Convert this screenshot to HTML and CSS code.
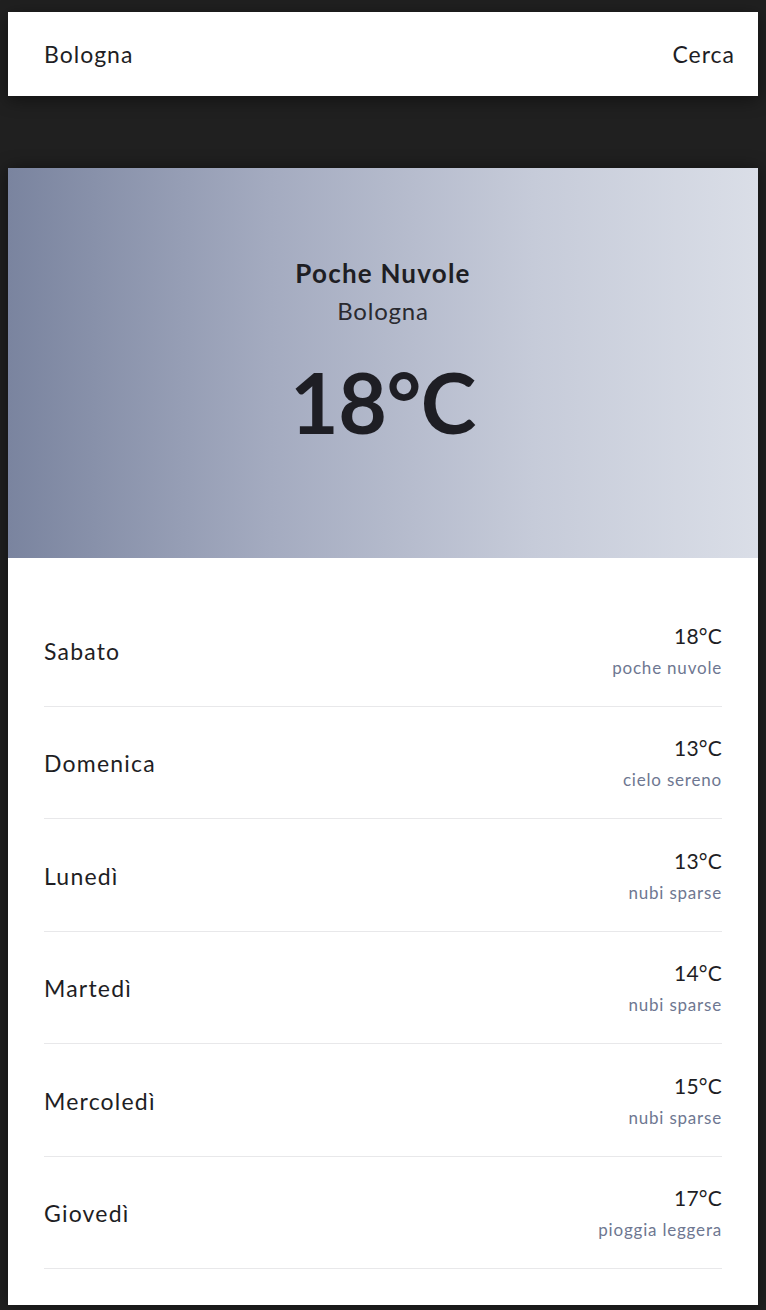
FILE: index.html
```html
<!DOCTYPE html>
<html lang="it">
<head>
<meta charset="utf-8">
<title>Meteo</title>
<link rel="stylesheet" href="styles.css">
</head>
<body>
<div class="page">
  <header class="topbar">
    <span class="city-input">Bologna</span>
    <span class="search">Cerca</span>
  </header>
  <main class="card">
    <section class="hero">
      <div class="hero-desc">Poche Nuvole</div>
      <div class="hero-city">Bologna</div>
      <div class="hero-temp">18°C</div>
    </section>
    <ul class="forecast">
      <li class="day"><span class="day-name">Sabato</span><div class="day-info"><span class="day-temp">18°C</span><span class="day-desc">poche nuvole</span></div></li>
      <li class="day"><span class="day-name">Domenica</span><div class="day-info"><span class="day-temp">13°C</span><span class="day-desc">cielo sereno</span></div></li>
      <li class="day"><span class="day-name">Lunedì</span><div class="day-info"><span class="day-temp">13°C</span><span class="day-desc">nubi sparse</span></div></li>
      <li class="day"><span class="day-name">Martedì</span><div class="day-info"><span class="day-temp">14°C</span><span class="day-desc">nubi sparse</span></div></li>
      <li class="day"><span class="day-name">Mercoledì</span><div class="day-info"><span class="day-temp">15°C</span><span class="day-desc">nubi sparse</span></div></li>
      <li class="day"><span class="day-name">Giovedì</span><div class="day-info"><span class="day-temp">17°C</span><span class="day-desc">pioggia leggera</span></div></li>
    </ul>
  </main>
</div>
</body>
</html>
```
FILE: styles.css
```css
html, body {
  margin: 0;
  background: #202020;
}
body {
  font-family: "Lato", "Noto Sans", sans-serif;
  color: #1e1e24;
}
.page {
  padding: 12px 8px 6px;
  display: flex;
  flex-direction: column;
  gap: 72px;
}
.topbar {
  height: 84px;
  background: #fff;
  display: flex;
  align-items: center;
  justify-content: space-between;
  padding: 0 24px 0 36px;
  box-shadow: 0 4px 16px rgba(0,0,0,0.45);
  font-size: 23px;
  letter-spacing: 1px;
}
.search {
  margin-right: -1px;
}
.card {
  background: #fff;
  box-shadow: 0 0 16px rgba(0,0,0,0.45);
}
.hero {
  height: 390px;
  background: linear-gradient(to right, #7a849f 0%, #a4abc0 35%, #c6cbd9 70%, #dadee7 100%);
  display: flex;
  flex-direction: column;
  align-items: center;
  padding-top: 88px;
  box-sizing: border-box;
}
.hero-desc {
  font-size: 26px;
  font-weight: 700;
  line-height: 34px;
  letter-spacing: 1.2px;
}
.hero-city {
  font-size: 24px;
  line-height: 34px;
  margin-top: 4px;
  letter-spacing: 0.8px;
  color: #2a2a30;
}
.hero-temp {
  font-size: 84px;
  font-weight: 700;
  line-height: 100px;
  margin-top: 24px;
  letter-spacing: -0.5px;
}
.forecast {
  list-style: none;
  margin: 0;
  padding: 36px 36px 36px;
}
.day {
  height: 112.5px;
  box-sizing: border-box;
  display: flex;
  align-items: center;
  justify-content: space-between;
  border-bottom: 1px solid #e8e8ea;
  padding-top: 2px;
}
.day-name {
  font-size: 23px;
  letter-spacing: 1.2px;
}
.day-info {
  display: flex;
  flex-direction: column;
  align-items: flex-end;
  gap: 8px;
}
.day-temp {
  font-size: 21px;
  line-height: 26px;
  letter-spacing: 0.2px;
}
.day-desc {
  font-size: 17px;
  line-height: 22px;
  letter-spacing: 0.8px;
  color: #6e7791;
}
```
